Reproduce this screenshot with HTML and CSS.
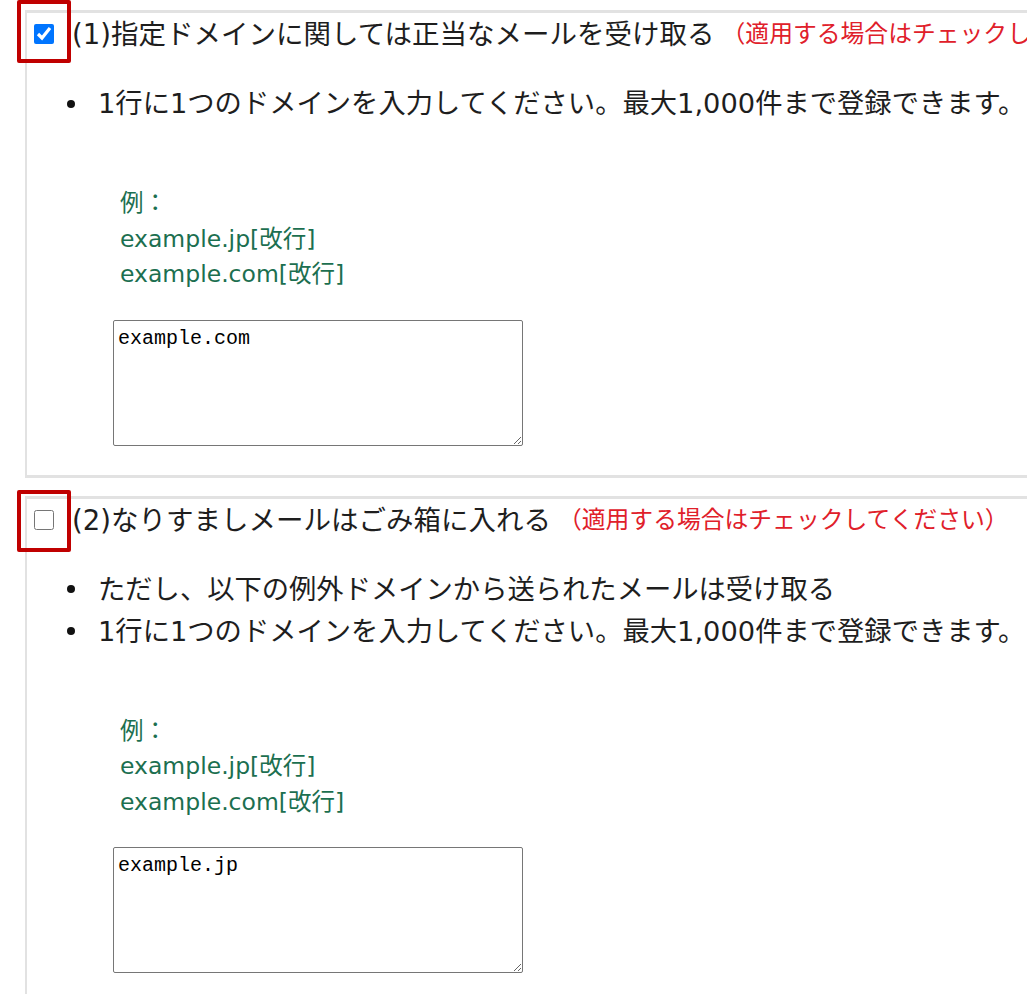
FILE: index.html
```html
<!DOCTYPE html>
<html lang="ja">
<head>
<meta charset="utf-8">
<title>ドメイン設定</title>
<link rel="stylesheet" href="styles.css">
</head>
<body>
<div class="page">
  <section class="panel panel-first">
    <div class="head">
      <span class="check-wrap">
        <input type="checkbox" class="check" checked>
        <span class="mark"></span>
      </span>
      <span class="title">(1)指定ドメインに関しては正当なメールを受け取る</span>
      <span class="note">（適用する場合はチェックしてください）</span>
    </div>
    <ul class="points">
      <li>1行に1つのドメインを入力してください。最大1,000件まで登録できます。</li>
    </ul>
    <div class="example">
      <div>例：</div>
      <div>example.jp[改行]</div>
      <div>example.com[改行]</div>
    </div>
    <textarea class="domains">example.com</textarea>
  </section>

  <section class="panel panel-second">
    <div class="head">
      <span class="check-wrap">
        <input type="checkbox" class="check">
        <span class="mark"></span>
      </span>
      <span class="title">(2)なりすましメールはごみ箱に入れる</span>
      <span class="note">（適用する場合はチェックしてください）</span>
    </div>
    <ul class="points">
      <li>ただし、以下の例外ドメインから送られたメールは受け取る</li>
      <li>1行に1つのドメインを入力してください。最大1,000件まで登録できます。</li>
    </ul>
    <div class="example">
      <div>例：</div>
      <div>example.jp[改行]</div>
      <div>example.com[改行]</div>
    </div>
    <textarea class="domains">example.jp</textarea>
  </section>
</div>
</body>
</html>
```

FILE: styles.css
```css
html, body {
  margin: 0;
  padding: 0;
  background: #ffffff;
}

body {
  width: 1027px;
  height: 994px;
  overflow: hidden;
  font-family: "DejaVu Sans", "Noto Sans CJK JP", sans-serif;
  color: #1e1e1e;
}

.page {
  padding-top: 10px;
}

.panel {
  width: 1120px;
  margin-left: 25px;
  border-style: solid;
  border-color: #e2e2e2;
  border-width: 3px 0 3px 2px;
  padding-bottom: 29px;
}

.panel-second {
  margin-top: 18px;
}

.head {
  display: flex;
  align-items: center;
  height: 42px;
  padding-left: 7px;
  white-space: nowrap;
}

.check-wrap {
  position: relative;
  display: inline-flex;
  width: 20px;
  height: 20px;
  margin-right: 18px;
}

.check {
  width: 20px;
  height: 20px;
  margin: 0;
}

.mark {
  position: absolute;
  left: -17px;
  top: -24px;
  width: 54px;
  height: 63px;
  box-sizing: border-box;
  border: 4px solid #c00000;
  border-radius: 2px;
  pointer-events: none;
}

.panel-second .mark {
  top: -20px;
  height: 62px;
}

.title {
  font-size: 27.5px;
  line-height: 42px;
}

.note {
  font-size: 23.8px;
  line-height: 42px;
  color: #e0202a;
  margin-left: 7px;
}

.points {
  margin: 28px 0 0;
  padding-left: 40px;
  list-style: none;
  font-size: 27.3px;
  line-height: 42px;
  white-space: nowrap;
}

.points li::before {
  content: "";
  display: inline-block;
  width: 8px;
  height: 8px;
  border-radius: 50%;
  background: #111;
  margin-right: 23px;
  vertical-align: middle;
  position: relative;
  top: -2px;
}

.example {
  margin: 61px 0 0 93px;
  font-size: 23.5px;
  line-height: 35.5px;
  color: #1c6f50;
}

.domains {
  display: block;
  margin: 27px 0 0 86px;
  width: 410px;
  height: 126px;
  box-sizing: border-box;
  border: 1px solid #767676;
  border-radius: 2px;
  padding: 5px 4px 3px;
  font-family: "Liberation Mono", monospace;
  font-size: 20px;
  line-height: 26px;
  color: #000;
  background: #fff;
}
```
